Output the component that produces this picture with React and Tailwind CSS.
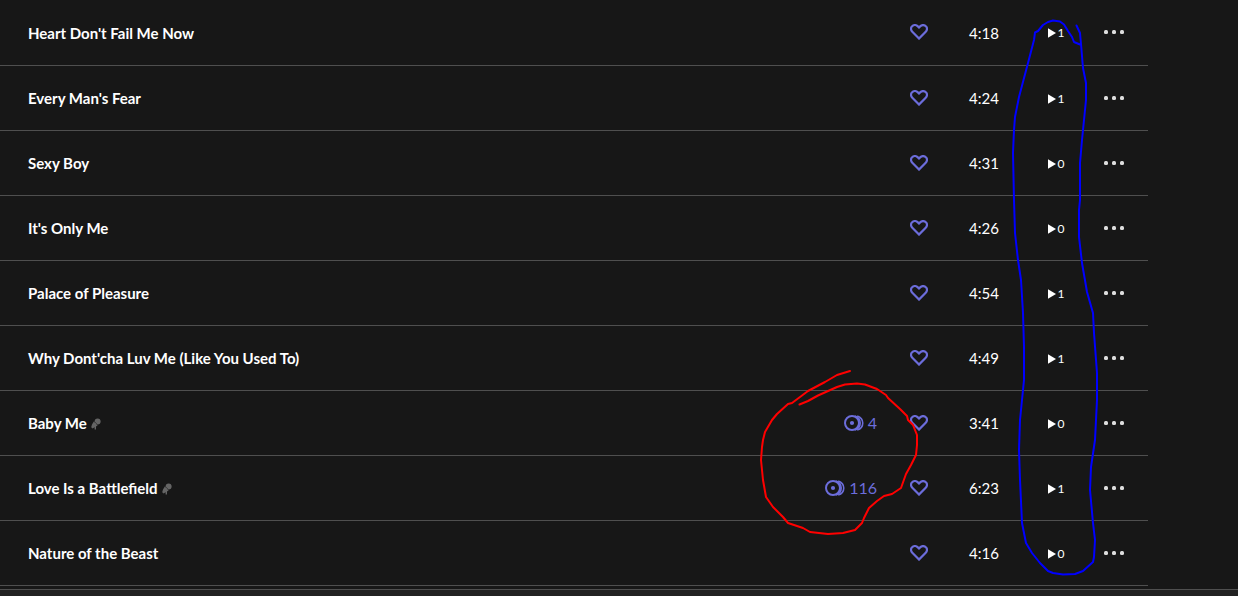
const tracks = [
  { title: "Heart Don't Fail Me Now", time: "4:18", plays: 1 },
  { title: "Every Man's Fear", time: "4:24", plays: 1 },
  { title: "Sexy Boy", time: "4:31", plays: 0 },
  { title: "It's Only Me", time: "4:26", plays: 0 },
  { title: "Palace of Pleasure", time: "4:54", plays: 1 },
  { title: "Why Dont'cha Luv Me (Like You Used To)", time: "4:49", plays: 1 },
  { title: "Baby Me", time: "3:41", plays: 0, lyrics: true, versions: 4 },
  { title: "Love Is a Battlefield", time: "6:23", plays: 1, lyrics: true, versions: 116 },
  { title: "Nature of the Beast", time: "4:16", plays: 0 },
];

const HeartIcon = () => (
  <svg width="18" height="16" viewBox="0 0 18 16" fill="none">
    <path
      d="M9 14.6 2.3 7.8C0.6 6 0.6 3.6 2.1 2.2 3.6 0.7 6.2 0.7 7.6 2.1L9 3.4l1.4-1.3c1.4-1.4 4-1.4 5.5 0.1 1.5 1.4 1.5 3.8-0.2 5.6L9 14.6Z"
      stroke="currentColor"
      strokeWidth="2.2"
    />
  </svg>
);

const VersionsIcon = () => (
  <svg width="20" height="16" viewBox="0 0 20 16" fill="none">
    <circle cx="8" cy="8" r="7" stroke="currentColor" strokeWidth="2" />
    <circle cx="8" cy="8" r="2.1" fill="currentColor" />
    <path d="M11 1c6.9 2.4 6.9 11.6 0 14" stroke="currentColor" strokeWidth="1.6" />
    <path d="M13.2 0.9c7.4 2.4 7.4 11.8 0 14.2" stroke="currentColor" strokeWidth="1.6" />
  </svg>
);

const MicIcon = () => (
  <svg width="10" height="12" viewBox="0 0 10 12" fill="#656565">
    <circle cx="6.6" cy="3.6" r="3" />
    <path d="M2.8 3.6 6.6 7.4 4 9 1.6 10.4 0.2 9.2 1 6.6Z" />
    <path d="M3.6 8h1.4v3.6H3.6z" />
    <path d="m3.4 3.4 3.6 3.6" stroke="#3a3a3a" strokeWidth="0.8" />
  </svg>
);

const PlayIcon = () => (
  <svg width="8" height="10" viewBox="0 0 8 10" fill="currentColor">
    <path d="M0 0.2 8 5 0 9.8Z" />
  </svg>
);

const DotsIcon = () => (
  <svg width="20" height="4" viewBox="0 0 20 4" fill="currentColor">
    <rect width="4" height="4" rx="1.5" />
    <rect x="8" width="4" height="4" rx="1.5" />
    <rect x="16" width="4" height="4" rx="1.5" />
  </svg>
);

const Track = ({ track }) => (
  <tr className="h-[65px] border-b border-[#4f4f4f]">
    <td className="pt-0.5 pl-7">
      <div className="flex items-center gap-1">
        <a href="#" className="font-bold">
          {track.title}
        </a>
        {track.lyrics && <MicIcon />}
      </div>
    </td>
    <td className="pr-[17px] text-base text-[#6c6ddb]">
      {track.versions && (
        <div className="flex items-center justify-end gap-1">
          <VersionsIcon />
          {track.versions}
        </div>
      )}
    </td>
    <td className="text-[#6c6ddb]">
      <button aria-label="Like" className="mx-auto block">
        <HeartIcon />
      </button>
    </td>
    <td className="pt-0.5 text-center">{track.time}</td>
    <td className="pt-0.5">
      <div className="flex items-center justify-center gap-0.5 text-xs">
        <PlayIcon />
        {track.plays}
      </div>
    </td>
    <td className="pr-2 text-[#dedede]">
      <button aria-label="More" className="mx-auto block">
        <DotsIcon />
      </button>
    </td>
  </tr>
);

// freehand pen marks over the list
const Marks = () => (
  <svg
    className="pointer-events-none absolute top-0 right-0"
    width="1238"
    height="596"
    viewBox="0 0 1238 596"
    fill="none"
    strokeWidth="2"
    strokeLinecap="round"
    strokeLinejoin="round"
  >
    <path
      stroke="#0000ff"
      d="M1076.5 25.5 1080 33 1081 44 1083 68 1086 83 1086 100 1082 140 1080 163 1080 200 1079 210 1079 237 1082 263 1087 292 1093 313 1094 333 1097 373 1097 400 1095 440 1091 467 1090 490 1093 523 1095 540 1094 557 1093 562 1083 571 1075 574 1063 574.5 1053 573 1048 571 1040 563 1032 553 1026 543 1022 523 1020 480 1019 450 1020 420 1022 400 1024 380 1024 347 1023 313 1021 280 1018 260 1015 233 1014 200 1013 153 1014 130 1015 117 1019 97 1028 63 1034 40 1035 32.5 1038 31 1043 25 1048 22 1053 20.5 1060 21.5 1064 24.5 1068 31 1072 37 1074 42 1080 44.5"
    />
    <path
      stroke="#ff0000"
      d="M799.5 404.5 808 401 818 395.5 837 387 845 384.5 857 383.5 865 384.5 877 389 886 395 888 398 900 409 907 416 908 420 913 425 917 435 917 445 916 455 911 465 906 474 901 488 892 494 884 496 877 501 869 508 864 518 862 523 855 530 843 533 828 534 810 532 803 528 788 523 783 517 773 507 766 497 763 480 761 460 762 447 763 440 765 432 772 420 777 414 788 404 792 403 808 391 825 382 837 375 850 371"
    />
  </svg>
);

const App = () => {
  return (
    <div className="relative flex min-h-screen flex-col overflow-hidden bg-[#171717] font-['Lato',sans-serif] text-[15px] text-white">
      <div className="pr-[90px] pb-[3px]">
        <table className="w-full table-fixed border-collapse">
          <colgroup>
            <col />
            <col className="w-[100px]" />
            <col className="w-[50px]" />
            <col className="w-20" />
            <col className="w-16" />
            <col className="w-[60px]" />
          </colgroup>
          <tbody>
            {tracks.map((track) => (
              <Track key={track.title} track={track} />
            ))}
          </tbody>
        </table>
      </div>
      <footer className="flex-1 border-t border-[#4f4f4f] bg-[#222222]" />
      <Marks />
    </div>
  );
};

export default App;
